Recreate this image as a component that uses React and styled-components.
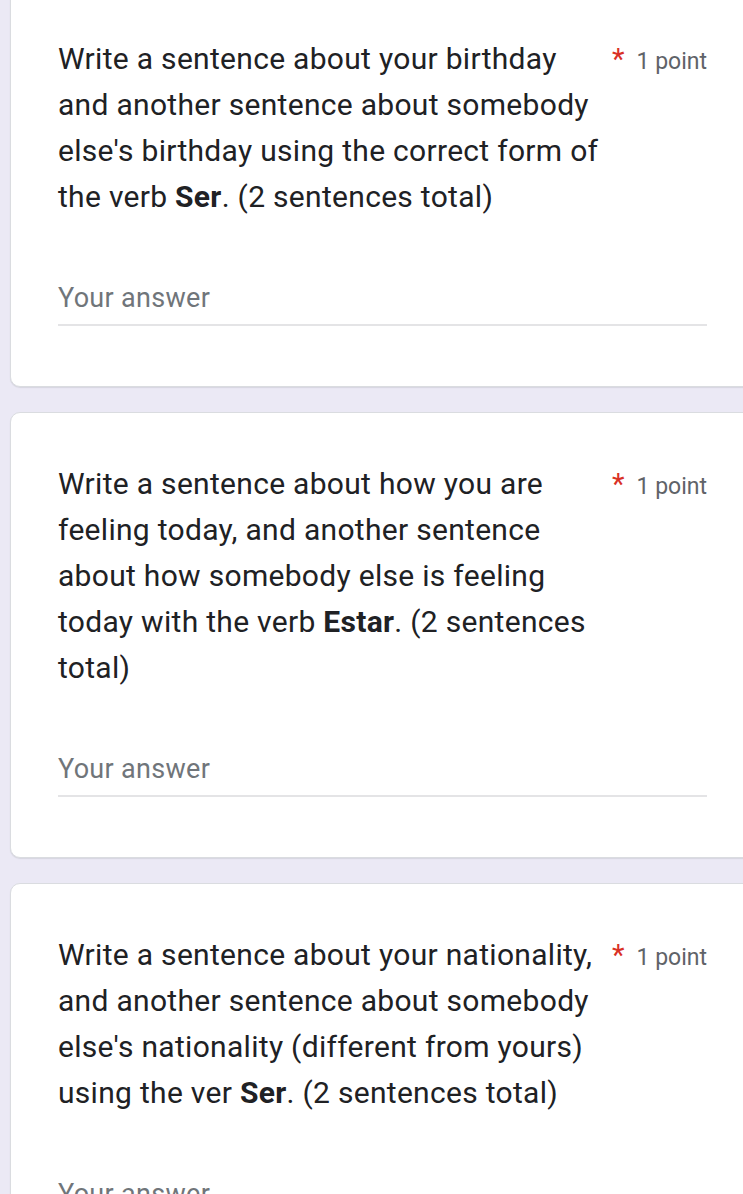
import React from "react";
import styled, { createGlobalStyle } from "styled-components";

const Global = createGlobalStyle`
  html, body { margin: 0; padding: 0; background: #ebe9f5; overflow: hidden; }
  body { font-family: Roboto, "Noto Sans", Arial, sans-serif; }
`;

const Page = styled.div`
  display: flex;
  flex-direction: column;
  gap: 25px;
  margin-top: -13px;
  width: 743px;
`;

const Card = styled.section`
  background: #fff;
  border: 1px solid #dadce0;
  border-radius: 10px;
  box-shadow: 0 1px 1px rgba(60, 64, 67, 0.12);
  margin-left: 10px;
  margin-right: -12px;
  padding: 48px 47px 60px 47px;
  display: flex;
  flex-direction: column;
  gap: 62px;
`;

const Header = styled.div`
  display: flex;
  align-items: flex-start;
`;

const Title = styled.div`
  flex: 1;
  font-size: 30px;
  line-height: 46px;
  color: #202124;
  letter-spacing: 0.3px;
  b { font-weight: 700; }
`;

const Points = styled.div`
  flex: none;
  display: flex;
  align-items: baseline;
  gap: 12px;
  white-space: nowrap;
  line-height: 46px;
  padding-left: 4px;
`;

const Star = styled.span`
  color: #d93025;
  font-size: 29px;
`;

const PointText = styled.span`
  color: #5f6368;
  font-size: 23px;
`;

const Answer = styled.div`
  font-size: 27px;
  line-height: 32px;
  letter-spacing: 0.3px;
  color: #70757a;
  padding-bottom: 10px;
  border-bottom: 2px solid #e4e4e6;
`;

const questions = [
  <>Write a sentence about your birthday and another sentence about somebody else's birthday using the correct form of the verb <b>Ser</b>. (2 sentences total)</>,
  <>Write a sentence about how you are feeling today, and another sentence about how somebody else is feeling today with the verb <b>Estar</b>. (2 sentences total)</>,
  <>Write a sentence about your nationality, and another sentence about somebody else's nationality (different from yours) using the ver <b>Ser</b>. (2 sentences total)</>,
];

export default function App() {
  return (
    <>
      <Global />
      <Page>
        {questions.map((q, i) => (
          <Card key={i}>
            <Header>
              <Title>{q}</Title>
              <Points>
                <Star>*</Star>
                <PointText>1 point</PointText>
              </Points>
            </Header>
            <Answer>Your answer</Answer>
          </Card>
        ))}
      </Page>
    </>
  );
}
